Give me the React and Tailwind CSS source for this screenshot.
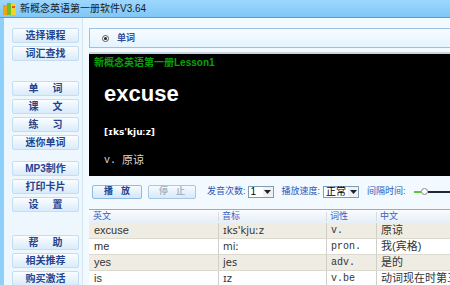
import React from "react";

const cjk = "font-['Liberation_Sans','Noto_Sans_CJK_SC',sans-serif]";

function SideButton({ label, wide }) {
  return (
    <div className="flex h-[15px] w-[67px] items-center justify-center rounded-[2px] border border-[#c4ddf1] bg-gradient-to-b from-[#fbfdff] to-[#d9ebf9] text-[10px] font-bold leading-none text-[#23438f]">
      {wide ? (
        <div className="flex gap-[14px]">
          <span>{label[0]}</span>
          <span>{label[1]}</span>
        </div>
      ) : (
        <span>{label}</span>
      )}
    </div>
  );
}

function Select({ value, width }) {
  return (
    <div className={`flex h-[12px] items-center border border-[#7f9db9] bg-white ${width}`}>
      <span className="flex-1 pl-[2px] text-[10px] leading-none text-black">{value}</span>
      <span className="flex h-[10px] w-[10px] items-center justify-center bg-[#eef2f6]">
        <svg width="7" height="4" viewBox="0 0 7 4">
          <path d="M0 0h7L3.5 4z" fill="#222" />
        </svg>
      </span>
    </div>
  );
}

const rows = [
  ["excuse", "ɪks'kjuːz", "v.", "原谅"],
  ["me", "miː", "pron.", "我(宾格)"],
  ["yes", "jes", "adv.", "是的"],
  ["is", "ɪz", "v.be", "动词现在时第三"],
];

export default function App() {
  return (
    <div className={`flex h-[285px] w-[450px] flex-col overflow-hidden bg-[#8fd0fa] ${cjk}`}>
      {/* title bar */}
      <div className="flex h-[17px] shrink-0 items-center gap-[3px] bg-gradient-to-b from-[#9dd7fd] to-[#7fc7f7] pl-[3px]">
        <svg width="14" height="13" viewBox="0 0 14 13">
          <rect x="0" y="3" width="4" height="10" fill="#f2a20f" />
          <rect x="4" y="1" width="4" height="12" fill="#6cbf2c" />
          <rect x="8" y="2" width="5" height="11" fill="#f5d22a" />
          <rect x="9" y="4" width="3" height="2" fill="#e05a18" />
        </svg>
        <span className="text-[10px] leading-none text-[#1a1a1a]">新概念英语第一册软件V3.64</span>
      </div>
      <div className="h-px shrink-0 bg-[#5f9cc8]" />

      <div className="flex flex-1 pl-[4px]">
        <div className="w-px bg-[#6aa7d4]" />
        <div className="flex flex-1 bg-[#f3faff]">
          {/* sidebar */}
          <div className="flex w-[79px] flex-col gap-[3px] border-r border-[#d3e6f4] bg-[#eef7fe] pl-[8px] pt-[10px]">
            <SideButton label="选择课程" />
            <SideButton label="词汇查找" />
            <div className="mt-[14px]" />
            <SideButton label="单词" wide />
            <SideButton label="课文" wide />
            <SideButton label="练习" wide />
            <SideButton label="迷你单词" />
            <div className="mt-[5px]" />
            <SideButton label="MP3制作" />
            <SideButton label="打印卡片" />
            <SideButton label="设置" wide />
            <div className="mt-[17px]" />
            <SideButton label="帮助" wide />
            <SideButton label="相关推荐" />
            <SideButton label="购买激活" />
          </div>

          {/* main */}
          <div className="flex flex-1 flex-col pl-[6px] pt-[10px]">
            <div className="flex h-[20px] items-center border border-[#9cc2e2] bg-gradient-to-b from-[#f8fcff] to-[#e4f3fe] pl-[12px]">
              <span className="flex h-[7px] w-[7px] items-center justify-center rounded-full border border-[#555] bg-white">
                <span className="h-[3px] w-[3px] rounded-full bg-[#222]" />
              </span>
              <span className="ml-[8px] text-[9px] font-bold leading-none text-[#2d4f99]">单词</span>
            </div>

            <div className="mt-[4px] flex h-[124px] flex-col border-t-2 border-[#c9d4dc] bg-black pl-[15px]">
              <div className="-ml-[10px] mt-[3px] text-[10px] font-bold leading-[12px] text-[#0aa00a]">
                新概念英语第一册Lesson1
              </div>
              <div className="mt-[14px] text-[22px] font-bold leading-[22px] text-white">excuse</div>
              <div className="mt-[21px] font-['DejaVu_Sans',sans-serif] text-[9px] font-bold leading-[12px] text-white">
                [ɪks'kjuːz]
              </div>
              <div className="mt-[16px] flex items-center text-[11px] leading-[13px] text-[#d8d8d8]">
                <span className="font-['Liberation_Mono',monospace] text-[10px]">v.</span>
                <span className="ml-[6px]">原谅</span>
              </div>
            </div>

            {/* controls */}
            <div className="mt-[8px] flex h-[15px] items-center pl-[3px]">
              <div className="flex h-[14px] w-[50px] items-center justify-center gap-[8px] rounded-[2px] border border-[#8fbbe2] bg-gradient-to-b from-[#f6fbff] to-[#d3e7f8] text-[9px] font-bold leading-none text-[#23438f]">
                <span>播</span>
                <span>放</span>
              </div>
              <div className="ml-[6px] flex h-[14px] w-[48px] items-center justify-center gap-[8px] rounded-[2px] border border-[#a9c8e4] bg-gradient-to-b from-[#f6fbff] to-[#d8e9f7] text-[9px] font-bold leading-none text-[#a6b5c6]">
                <span>停</span>
                <span>止</span>
              </div>
              <span className="ml-[11px] text-[9px] leading-none text-[#2b55b8]">发音次数:</span>
              <div className="ml-[2px]">
                <Select value="1" width="w-[26px]" />
              </div>
              <span className="ml-[8px] text-[9px] leading-none text-[#2b55b8]">播放速度:</span>
              <div className="ml-[3px]">
                <Select value="正常" width="w-[36px]" />
              </div>
              <span className="ml-[8px] text-[9px] leading-none text-[#2b55b8]">间隔时间:</span>
              <div className="ml-[8px] flex flex-1 items-center">
                <div className="h-[2px] w-[7px] bg-[#5fc23a]" />
                <div className="h-[7px] w-[7px] rounded-full border border-[#888] bg-white" />
                <div className="h-[2px] flex-1 bg-[#1e2a36]" />
              </div>
            </div>

            {/* table */}
            <div className="mt-[10px] flex-1 border-t border-[#a0a8b0] bg-white">
              <div className="flex h-[13px] items-center bg-gradient-to-b from-[#fafcfe] to-[#e6eef6] text-[9px] leading-none text-[#3563c4]">
                <div className="w-[129px] pl-[4px]">英文</div>
                <div className="w-[108px] border-l border-[#d6dde4] pl-[3px]">音标</div>
                <div className="w-[50px] border-l border-[#d6dde4] pl-[3px]">词性</div>
                <div className="flex-1 border-l border-[#d6dde4] pl-[3px]">中文</div>
              </div>
              {rows.map((r, i) => (
                <div
                  key={i}
                  className={`flex h-[16px] items-center border-b border-[#dcdad0] text-[11px] leading-none text-[#333] ${
                    i % 2 === 0 ? "bg-[#efede3]" : "bg-white"
                  }`}
                >
                  <div className="flex h-full w-[129px] items-center pl-[5px]">{r[0]}</div>
                  <div className="flex h-full w-[108px] items-center border-l border-[#d0d0c8] pl-[4px] font-['DejaVu_Sans',sans-serif] text-[10px]">
                    {r[1]}
                  </div>
                  <div className="flex h-full w-[50px] items-center border-l border-[#d0d0c8] pl-[4px] font-['Liberation_Mono',monospace] text-[10px]">
                    {r[2]}
                  </div>
                  <div className="flex h-full flex-1 items-center overflow-hidden whitespace-nowrap border-l border-[#d0d0c8] pl-[4px]">
                    {r[3]}
                  </div>
                </div>
              ))}
            </div>
          </div>
        </div>
      </div>
    </div>
  );
}
